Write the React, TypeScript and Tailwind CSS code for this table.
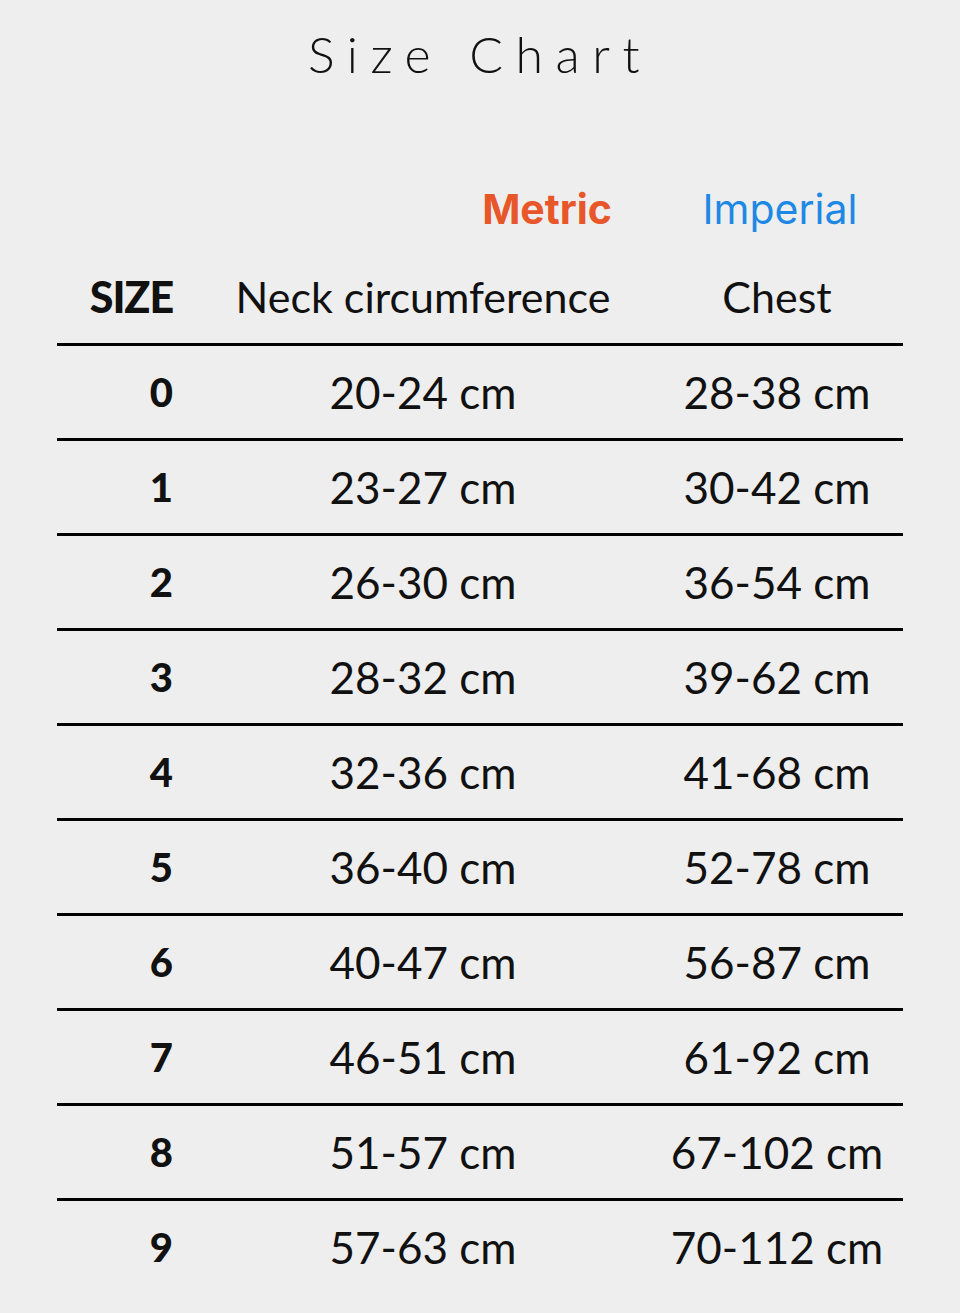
import React from 'react';

const rows = [
  { size: '0', neck: '20-24 cm', chest: '28-38 cm' },
  { size: '1', neck: '23-27 cm', chest: '30-42 cm' },
  { size: '2', neck: '26-30 cm', chest: '36-54 cm' },
  { size: '3', neck: '28-32 cm', chest: '39-62 cm' },
  { size: '4', neck: '32-36 cm', chest: '41-68 cm' },
  { size: '5', neck: '36-40 cm', chest: '52-78 cm' },
  { size: '6', neck: '40-47 cm', chest: '56-87 cm' },
  { size: '7', neck: '46-51 cm', chest: '61-92 cm' },
  { size: '8', neck: '51-57 cm', chest: '67-102 cm' },
  { size: '9', neck: '57-63 cm', chest: '70-112 cm' },
];

const cols = 'grid grid-cols-[138px_456px_252px]';

const App: React.FC = () => {
  return (
    <div className="min-h-[1313px] w-[960px] bg-[#eeeeee] text-[#111111] font-['Lato',sans-serif]">
      <h1 className="pt-[26px] text-center text-[50px] leading-[56px] font-light tracking-[0.25em]">
        Size Chart
      </h1>

      <div className="mx-[57px]">
        {/* unit labels */}
        <div className={`${cols} mt-[107px] h-[40px] items-center font-['Inter',sans-serif] text-[41px] leading-[40px]`}>
          <div />
          <div className="text-right pr-[39px] font-bold text-[#e8572a]">Metric</div>
          <div className="text-center pl-[6px] text-[#1e88e5]">Imperial</div>
        </div>

        {/* header */}
        <div className={`${cols} h-[114px] items-center pt-[22px]`}>
          <div className="text-right pr-[22px] text-[43px] font-black tracking-tight">SIZE</div>
          <div className="text-center text-[43px]">Neck circumference</div>
          <div className="text-center text-[43px]">Chest</div>
        </div>

        {rows.map((r) => (
          <div key={r.size} className={`${cols} h-[95px] items-center border-t-[3px] border-black`}>
            <div className="text-right pr-[22px] text-[40px] font-black">{r.size}</div>
            <div className="text-center text-[44px]">{r.neck}</div>
            <div className="text-center text-[44px]">{r.chest}</div>
          </div>
        ))}
      </div>
    </div>
  );
};

export default App;
